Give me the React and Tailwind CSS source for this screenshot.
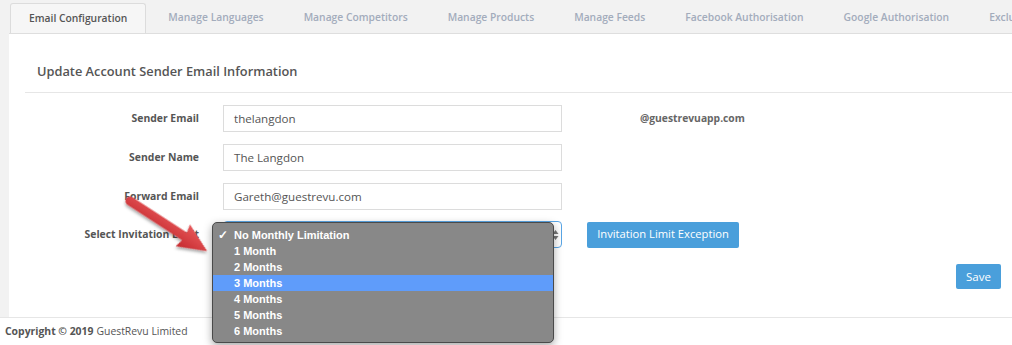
// App.jsx - Email Configuration settings tab
import React from 'react';

const tabs = [
  'Email Configuration',
  'Manage Languages',
  'Manage Competitors',
  'Manage Products',
  'Manage Feeds',
  'Facebook Authorisation',
  'Google Authorisation',
  'Exclusions',
];

const months = [
  'No Monthly Limitation',
  '1 Month',
  '2 Months',
  '3 Months',
  '4 Months',
  '5 Months',
  '6 Months',
];

const FieldRow = ({ label, children }) => (
  <div className="flex items-center h-[27px]">
    <label className="w-[174px] text-right text-[10.4px] font-bold text-[#555]">{label}</label>
    {children}
  </div>
);

const TextBox = ({ value }) => (
  <div className="ml-[24px] w-[339px] h-[27px] border border-[#dcdcdc] bg-white flex items-center pl-[10px] text-[11.6px] text-[#555]">
    {value}
  </div>
);

const RedArrow = () => (
  <svg width="110" height="80" viewBox="0 0 110 80" className="absolute left-[115px] top-[185px]">
    <defs>
      <linearGradient id="arrowFill" x1="0" y1="0" x2="0" y2="1">
        <stop offset="0" stopColor="#e8585a" />
        <stop offset="1" stopColor="#c52a2f" />
      </linearGradient>
      <filter id="arrowShadow" x="-20%" y="-20%" width="140%" height="160%">
        <feDropShadow dx="1" dy="2" stdDeviation="1.5" floodColor="#000" floodOpacity="0.35" />
      </filter>
    </defs>
    {/* drawn horizontally, then turned toward the select */}
    <g transform="translate(15 16) rotate(33)" filter="url(#arrowShadow)">
      <path
        d="M0 -4.5 L65 -4.5 L63 -13 L92 0 L63 13 L65 4.5 L0 4.5 A4.5 4.5 0 0 1 0 -4.5 Z"
        fill="url(#arrowFill)"
      />
    </g>
  </svg>
);

const App = () => {
  return (
    <div className="relative w-[1012px] h-[345px] overflow-hidden bg-white font-['Open_Sans',sans-serif]">
      <div className="h-[317px] bg-[#f2f2f2] pl-[9px] flex flex-col">
        {/* TABS */}
        <div className="h-[34px] flex items-end border-b border-[#dedede] whitespace-nowrap overflow-hidden">
          {tabs.map((tab, i) => (
            <div
              key={tab}
              className={
                i === 0
                  ? 'ml-[1px] mr-[2px] h-[30px] px-[18px] flex items-center bg-[#f6f6f6] border border-b-0 border-[#dcdcdc] rounded-t-[3px] text-[10.3px] font-semibold text-[#555]'
                  : 'h-[30px] px-[20px] flex items-center text-[10.3px] font-semibold text-[#a3acbc]'
              }
            >
              {tab}
            </div>
          ))}
        </div>

        {/* PANEL */}
        <div className="flex-1 bg-white pt-[17px] pl-[16px]">
          <div className="h-[42px] flex items-center pl-[12px] border-b border-[#e6e6e6] text-[12.8px] font-semibold text-[#555]">
            Update Account Sender Email Information
          </div>

          <div className="mt-[12px] flex flex-col gap-[12px]">
            <FieldRow label="Sender Email">
              <TextBox value="thelangdon" />
              <span className="ml-[78px] text-[10.3px] font-bold text-[#666]">@guestrevuapp.com</span>
            </FieldRow>
            <FieldRow label="Sender Name">
              <TextBox value="The Langdon" />
            </FieldRow>
            <FieldRow label="Forward Email">
              <TextBox value="Gareth@guestrevu.com" />
            </FieldRow>
            <div className="flex items-center h-[27px] -mt-[1px]">
              <label className="w-[174px] text-right text-[10.4px] font-bold text-[#555]">Select Invitation Limit</label>
              <div className="ml-[24px] w-[339px] h-[27px] border border-[#5aa6e6] rounded-[4px] bg-white flex items-center justify-end pr-[2px]">
                <svg width="7" height="12" viewBox="0 0 7 12">
                  <path d="M3.5 1 L6.5 5 L0.5 5 Z M3.5 11 L6.5 7 L0.5 7 Z" fill="#777" />
                </svg>
              </div>
              <button className="ml-[25px] h-[26px] w-[152px] rounded-[2px] bg-[#4a9fdb] text-white text-[11.2px]">
                Invitation Limit Exception
              </button>
            </div>
          </div>

          <div className="mt-[16px] flex justify-end pr-[11px]">
            <button className="w-[45px] h-[25px] rounded-[2px] bg-[#4a9fdb] text-white text-[11.5px]">Save</button>
          </div>
        </div>
      </div>

      {/* FOOTER */}
      <div className="h-[28px] border-t border-[#e6e6e6] flex items-center pl-[5px] text-[10.4px] text-[#555]">
        <span className="font-bold">Copyright © 2019</span>
        <span className="ml-[3px]">GuestRevu Limited</span>
      </div>

      {/* OPEN SELECT MENU */}
      <div className="absolute left-[212px] top-[222px] w-[342px] h-[121px] rounded-[5px] border border-[#4a4a4a] bg-[#888888] shadow-[0_3px_8px_rgba(0,0,0,0.35)] pt-[4px] font-['Liberation_Sans',Arial,sans-serif] text-[11px] font-bold text-white">
        {months.map((m, i) => (
          <div key={m} className={`h-[16px] flex items-center ${i === 3 ? 'bg-[#5f9cfa]' : ''}`}>
            <span className="w-[21px] pl-[5px] text-[12px]">{i === 0 ? '✓' : ''}</span>
            <span>{m}</span>
          </div>
        ))}
      </div>

      <RedArrow />
    </div>
  );
};

export default App;
